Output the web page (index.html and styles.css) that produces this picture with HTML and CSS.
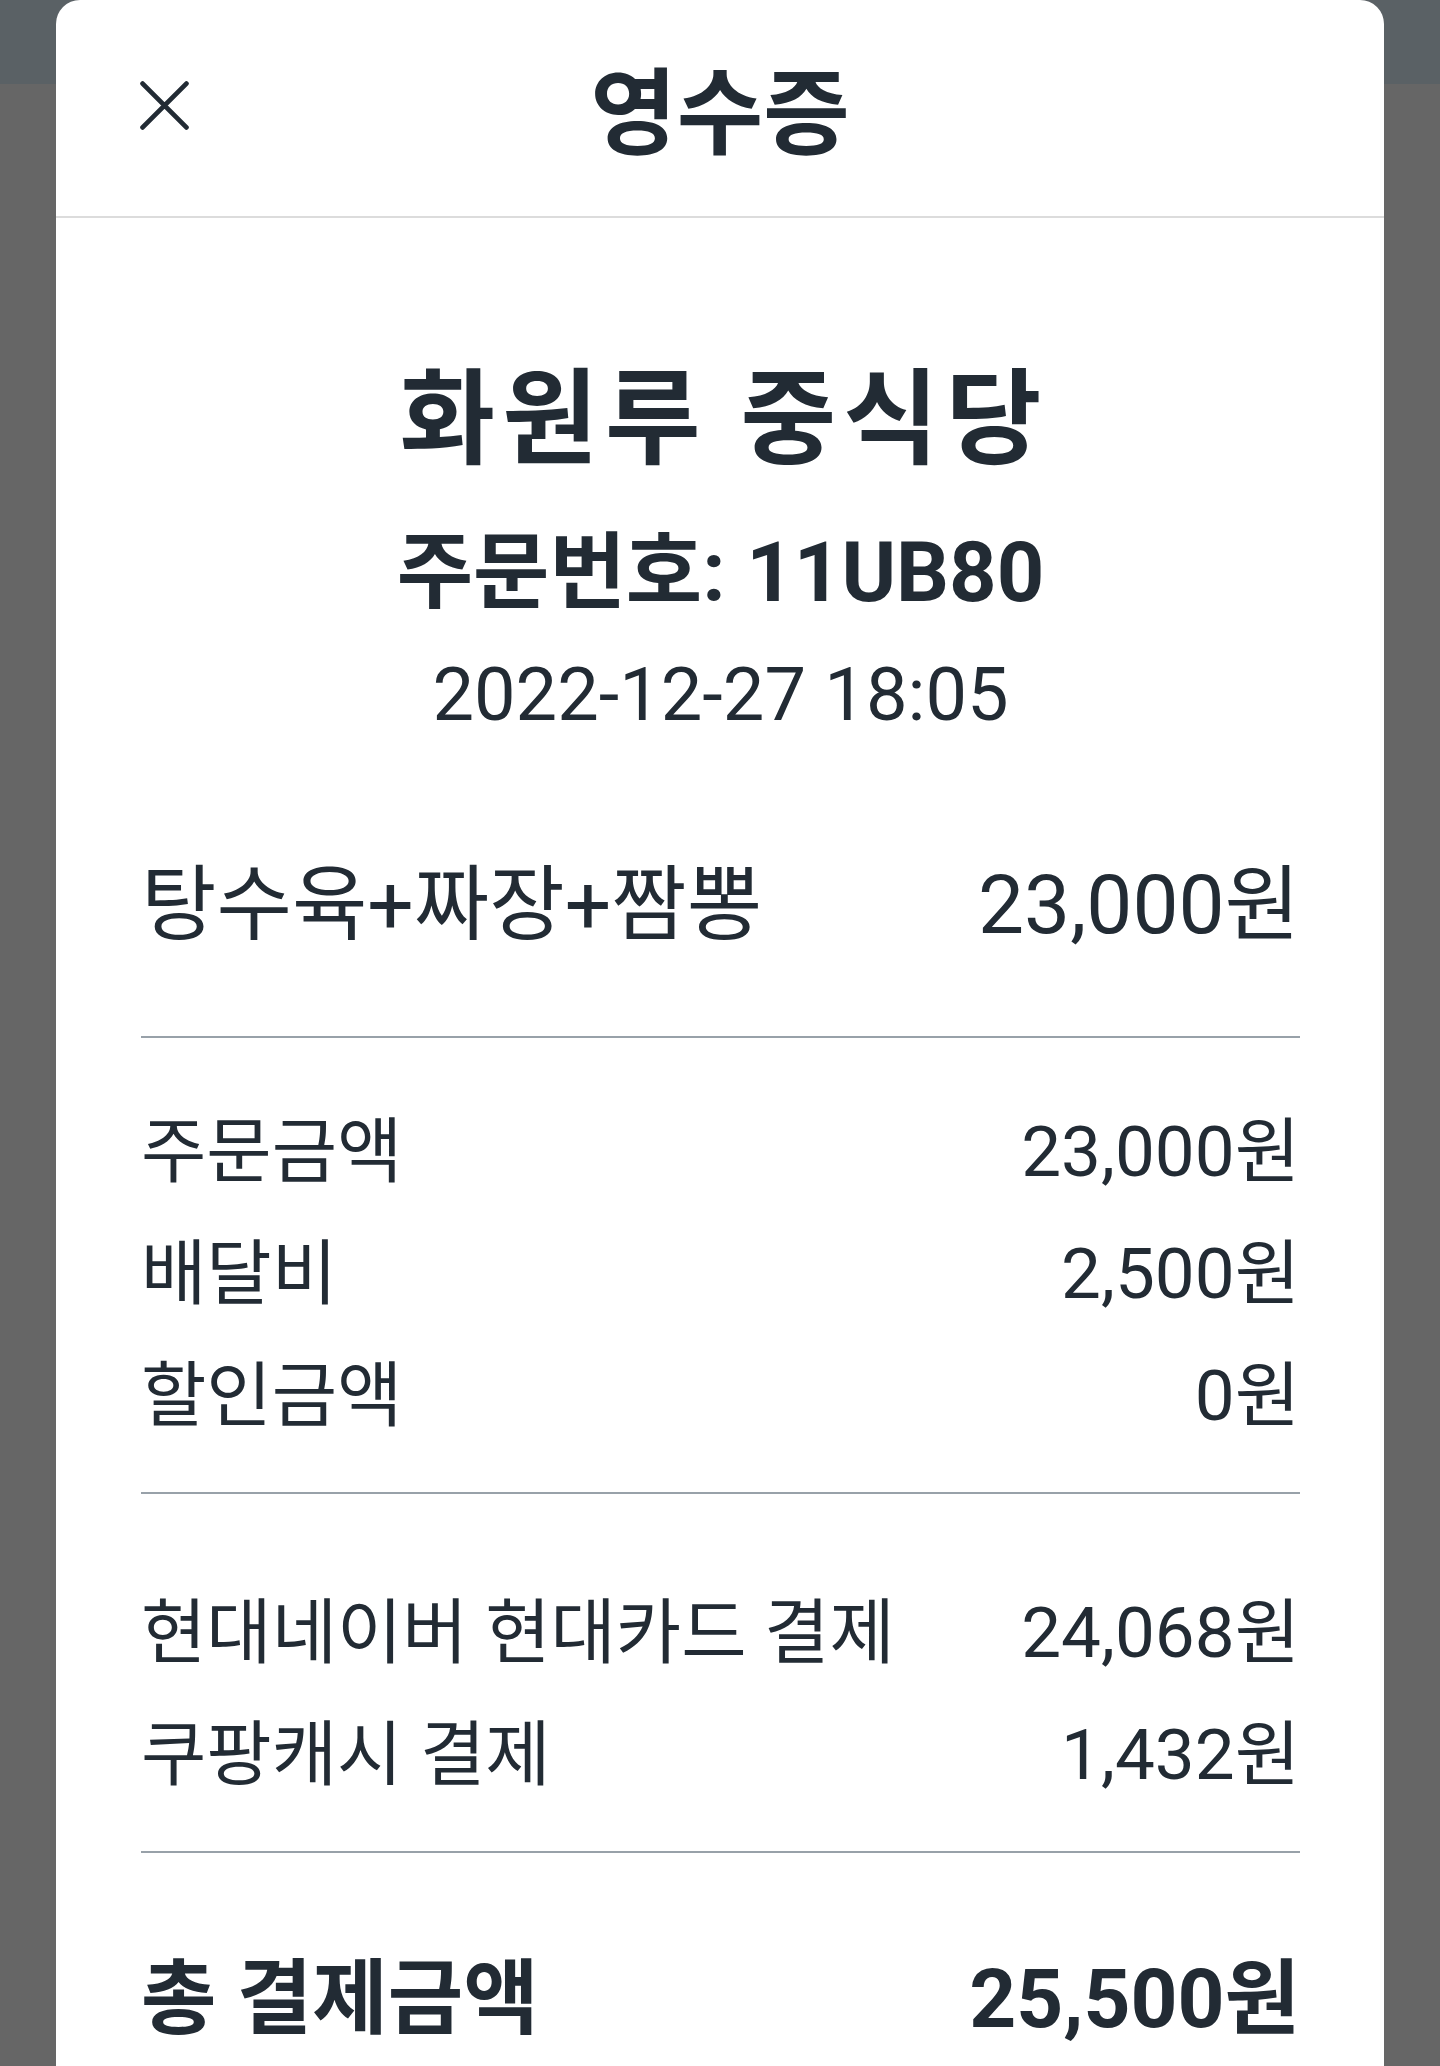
FILE: index.html
```html
<!DOCTYPE html>
<html lang="ko">
<head>
<meta charset="utf-8">
<title>영수증</title>
<link rel="stylesheet" href="styles.css">
</head>
<body>
<div class="sheet">
  <header class="sheet-header">
    <button class="close-btn" type="button" aria-label="닫기">
      <svg width="49" height="49" viewBox="0 0 49 49" aria-hidden="true">
        <path d="M2.6 2.6 L46.4 46.4 M46.4 2.6 L2.6 46.4" fill="none" stroke="#222b34" stroke-width="4.8" stroke-linecap="round"/>
      </svg>
    </button>
    <h1 class="sheet-title">영수증</h1>
    <span class="header-spacer"></span>
  </header>
  <main class="receipt">
    <section class="shop">
      <h2 class="shop-name">화원루 중식당</h2>
      <p class="order-no">주문번호: 11UB80</p>
      <p class="order-date">2022-12-27 18:05</p>
    </section>
    <section class="block block-items">
      <div class="row row-item"><span>탕수육+짜장+짬뽕</span><span>23,000원</span></div>
    </section>
    <section class="block block-amounts">
      <div class="row"><span>주문금액</span><span>23,000원</span></div>
      <div class="row"><span>배달비</span><span>2,500원</span></div>
      <div class="row"><span>할인금액</span><span>0원</span></div>
    </section>
    <section class="block block-payments">
      <div class="row"><span>현대네이버 현대카드 결제</span><span>24,068원</span></div>
      <div class="row"><span>쿠팡캐시 결제</span><span>1,432원</span></div>
    </section>
    <section class="block-total">
      <div class="row row-total"><span>총 결제금액</span><span>25,500원</span></div>
    </section>
  </main>
</div>
</body>
</html>
```

FILE: styles.css
```css
html, body {
  margin: 0;
  padding: 0;
}

body {
  background: linear-gradient(#5a6165 0, #5a6165 84px, #666666 84px, #666666 100%);
  min-height: 100vh;
  font-family: Roboto, "Noto Sans CJK KR", sans-serif;
  color: #222b34;
}

.sheet {
  margin: 0 56px;
  background: #ffffff;
  border-radius: 24px 24px 0 0;
  min-height: 2066px;
}

.sheet-header {
  display: grid;
  grid-template-columns: 1fr auto 1fr;
  align-items: center;
  height: 216px;
  padding: 0 84px;
  border-bottom: 2px solid #dcdcdc;
}

.close-btn {
  justify-self: start;
  display: block;
  width: 49px;
  height: 49px;
  padding: 0;
  margin: 0 0 5px 0;
  border: 0;
  background: none;
}

.close-btn svg {
  display: block;
}

.sheet-title {
  margin: 0;
  padding-top: 14px;
  font-size: 94px;
  line-height: 1;
  font-weight: 700;
  text-align: center;
}

.receipt {
  padding: 0 84px 0 85px;
}

.shop {
  padding-top: 138px;
  text-align: center;
}

.shop-name {
  margin: 0;
  padding-left: 7px;
  font-size: 104px;
  line-height: 130px;
  font-weight: 700;
  letter-spacing: 7px;
}

.order-no {
  margin: 37px 0 0;
  font-size: 83px;
  line-height: 100px;
  font-weight: 700;
}

.order-date {
  margin: 22px 0 0;
  font-size: 74px;
  line-height: 100px;
  font-weight: 400;
}

.block {
  border-bottom: 2px solid #98a1a9;
}

.block-items {
  padding: 110px 0 81px;
}

.block-amounts {
  padding: 53px 0 35px;
}

.block-payments {
  padding: 78px 0 35px;
}

.block-total {
  padding-top: 96px;
}

.row {
  display: flex;
  justify-content: space-between;
  align-items: baseline;
  font-size: 71px;
  line-height: 122px;
  white-space: nowrap;
}

.row-item {
  font-size: 82px;
  line-height: 100px;
}

.row-total {
  font-size: 82px;
  line-height: 100px;
  font-weight: 700;
}
```
